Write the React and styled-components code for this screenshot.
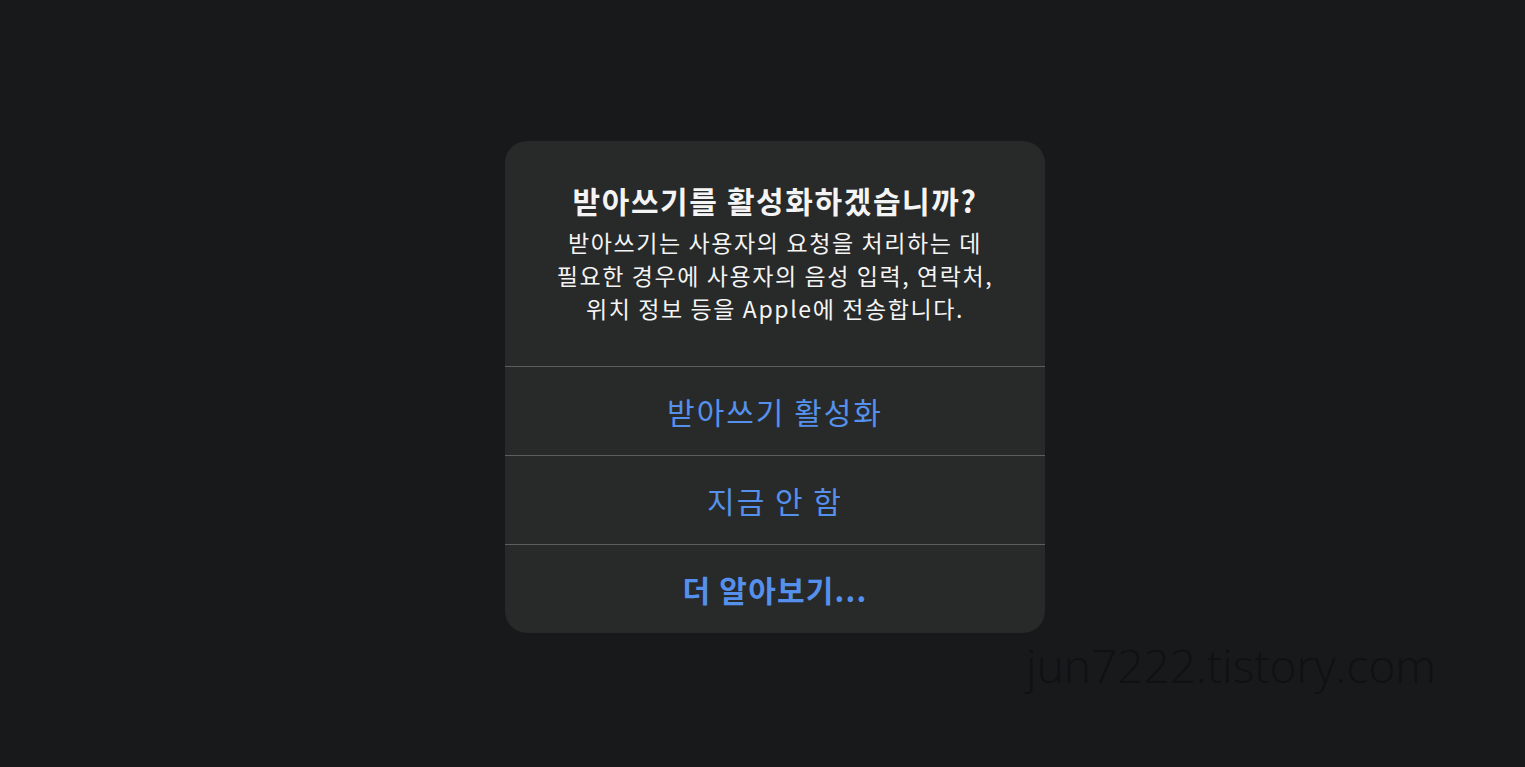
import React from 'react'
import styled, { createGlobalStyle } from 'styled-components'

const colors = {
  page: '#18191b',
  panel: '#282929',
  line: '#5c5d5e',
  white: '#f4f4f4',
  blue: '#5591ec',
  mark: '#101112',
}

const GlobalStyle = createGlobalStyle`
  html, body {
    margin: 0;
    padding: 0;
    background: ${colors.page};
  }
  body {
    font-family: "Noto Sans CJK KR", "Noto Sans", sans-serif;
  }
`

const Page = styled.div`
  width: 1525px;
  height: 767px;
  box-sizing: border-box;
  padding-top: 141px;
  display: flex;
  flex-direction: column;
  background: ${colors.page};
  overflow: hidden;
`

const Dialog = styled.div`
  width: 540px;
  margin-left: 505px;
  border-radius: 22px;
  background: ${colors.panel};
  overflow: hidden;
  display: flex;
  flex-direction: column;
`

const Header = styled.div`
  padding: 40px 10px 41px;
  text-align: center;
  color: ${colors.white};
`

const Title = styled.h1`
  margin: 0 0 7px;
  font-size: 30px;
  line-height: 38px;
  font-weight: 700;
  letter-spacing: 1.6px;
`

const Message = styled.p`
  margin: 0;
  font-size: 23px;
  line-height: 33px;
  font-weight: 400;
  letter-spacing: 1.6px;
`

const Action = styled.button`
  height: 89px;
  border: 0;
  border-top: 1px solid ${colors.line};
  background: transparent;
  color: ${colors.blue};
  font-family: inherit;
  font-size: 30px;
  font-weight: ${p => (p.$strong ? 700 : 400)};
  letter-spacing: ${p => (p.$strong ? '1.2px' : '2px')};
  display: flex;
  align-items: center;
  justify-content: center;
  padding: 0;
  cursor: pointer;
`

const Watermark = styled.div`
  align-self: flex-end;
  margin-right: 89px;
  margin-top: 2px;
  font-family: "Open Sans", "Noto Sans", sans-serif;
  font-weight: 300;
  font-size: 46px;
  line-height: 60px;
  color: ${colors.mark};
`

const App = () => {
  return (
    <Page>
      <GlobalStyle />
      <Dialog>
        <Header>
          <Title>받아쓰기를 활성화하겠습니까?</Title>
          <Message>
            받아쓰기는 사용자의 요청을 처리하는 데<br />
            필요한 경우에 사용자의 음성 입력, 연락처,<br />
            위치 정보 등을 Apple에 전송합니다.
          </Message>
        </Header>
        <Action>받아쓰기 활성화</Action>
        <Action>지금 안 함</Action>
        <Action $strong>더 알아보기...</Action>
      </Dialog>
      <Watermark>jun7222.tistory.com</Watermark>
    </Page>
  )
}

export default App
